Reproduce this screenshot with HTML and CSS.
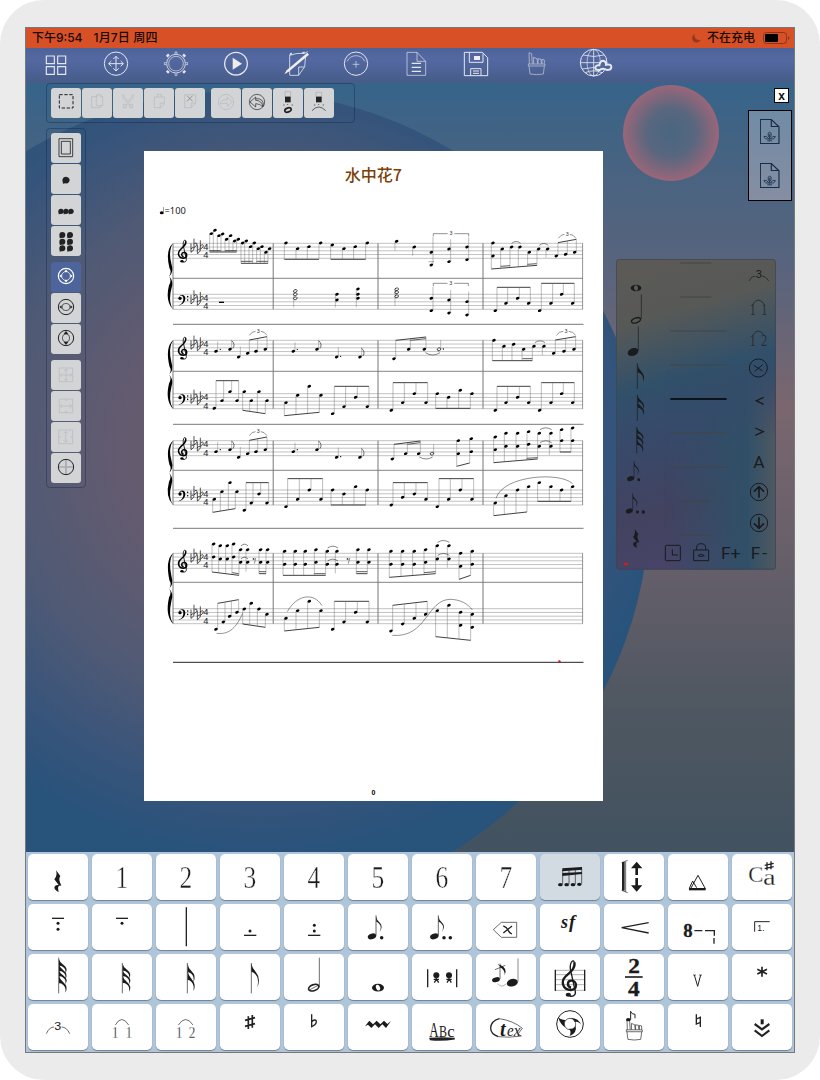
FILE: index.html
```html
<!DOCTYPE html>
<html lang="zh-CN">
<head>
<meta charset="utf-8">
<title>水中花7</title>
<link rel="stylesheet" href="styles.css">
</head>
<body>
<svg class="defs" width="0" height="0">
  <defs>
    <symbol id="treble" viewBox="0 0 54 112" overflow="visible">
      <path d="M30 84C17 81 18 62 32 63C49 64 50 90 30 91C6 91-3 66 15 49C32 34 44 24 40 8" fill="none" stroke="currentColor" stroke-width="7"/>
      <path d="M40 9C38-3 26 6 28 28L43 96C45 108 34 111 26 109" fill="none" stroke="currentColor" stroke-width="4"/>
      <ellipse cx="22" cy="105" rx="8" ry="6" fill="currentColor"/>
    </symbol>
    <symbol id="bass" viewBox="0 0 32 34" overflow="visible">
      <path d="M3 10C3-2 22-3 22 11C22 24 12 30 1 33C14 27 16 20 16 11C16 2 8 1 4 7Z" fill="currentColor"/>
      <circle cx="6" cy="11" r="5" fill="currentColor"/><circle cx="29" cy="6" r="2.3" fill="currentColor"/><circle cx="29" cy="16" r="2.3" fill="currentColor"/>
    </symbol>
    <symbol id="flat" viewBox="0 0 10 28" overflow="visible"><path d="M1 0V27C11 21 12 13 7 13Q4 13 1 17" fill="none" stroke="currentColor" stroke-width="2"/></symbol>
    <symbol id="rest" viewBox="0 0 24 68" overflow="visible"><path d="M7 1L20 18Q13 27 22 44L23 47Q9 42 15 67Q-3 56 4 48Q8 44 15 45L2 28Q12 18 7 1Z" fill="currentColor"/></symbol>
    <symbol id="dotted8" viewBox="0 0 50 74" overflow="visible"><ellipse cx="13" cy="63" rx="13" ry="8.5" transform="rotate(-18 13 63)" fill="currentColor"/><path d="M25 0V60" stroke="currentColor" stroke-width="2"/><path d="M25 3Q27 15 37 23Q47 33 36 50Q43 33 35 26Q31 20 26 19Z" fill="currentColor"/><circle cx="42" cy="67" r="5.3" fill="currentColor"/></symbol>
    <symbol id="flag" viewBox="0 0 26 50" preserveAspectRatio="none" overflow="visible"><path d="M1 0Q3 12 14 20Q30 33 20 50Q23 34 13 27Q7 22 1 23Z" fill="currentColor"/></symbol>
    <symbol id="cup" viewBox="0 0 52 70" overflow="visible"><path d="M3 43L6 66Q26 70 46 66L49 43M1 36H51V42H1ZM4 36L3 2L11 5L13 35M17 35V16L27 20L29 35M30 35V20L39 22L40 35M42 35V22L49 24V35" fill="none" stroke="currentColor" stroke-width="2"/></symbol>
    <symbol id="newpage" viewBox="0 0 58 74" overflow="visible"><path d="M1 1H34L57 23V73H1ZM34 1V22H57" fill="none" stroke="#152d48" stroke-width="3.5"/><path d="M29 64V44M22 65H36M25 51Q22 39 29 39Q36 39 33 51L29 55ZM27 59Q18 48 12 52Q14 62 27 59ZM31 59Q40 48 46 52Q44 62 31 59Z" fill="none" stroke="#152d48" stroke-width="2.5"/></symbol>
  </defs>
</svg>
<main class="device">
<div class="screen">
  <header class="status">
    <span class="clock">下午9:54</span><span class="date">1月7日 周四</span>
    <svg class="moon" viewBox="0 0 10 10"><path d="M3 .5A5 5 0 1 0 9.700 7A5.200 5.200 0 0 1 3 .5Z"/></svg>
    <span class="power">不在充电</span>
    <svg class="battery" viewBox="0 0 27 12"><rect x=".5" y=".5" width="23" height="11" rx="3" fill="none" stroke="#83371f"/><path d="M25 4Q28 6 25 8Z" fill="#83371f"/><rect x="2" y="2" width="13" height="8" rx="1"/></svg>
  </header>
  <nav class="menu">
    <svg viewBox="78 144 180 105"><path d="M139 168H163V191H139ZM173 168H197V191H173ZM139 200H163V223H139ZM173 200H197V223H173Z" stroke-width="3.500"/></svg>
    <svg viewBox="258 144 180 105"><circle cx="348" cy="191" r="35" stroke-width="3"/><path d="M348 169V213M326 191H370M340 177L348 169L356 177M340 205L348 213L356 205M334 183L326 191L334 199M362 183L370 191L362 199" stroke-width="3"/></svg>
    <svg viewBox="438 144 180 105"><circle cx="528" cy="191" r="28" stroke-width="2.500"/><circle cx="528" cy="191" r="22"/><path d="M525 162V156H531V162M525 220V226H531V220M499 188H493V194H499M557 188H563V194H557"/><path d="M506 169l-5-5M550 169l5-5M506 213l-5 5M550 213l5 5" stroke-width="9"/></svg>
    <svg viewBox="618 144 180 105"><circle cx="708" cy="191" r="34" stroke-width="4"/><path d="M698 173V209L726 191Z" class="solid"/></svg>
    <svg viewBox="798 144 180 105"><path d="M869 225V166Q890 158 914 160L923 155M917 167L914 200L896 226H869M896 226V201H914M869 166L874 158" stroke-width="2.500"/><path d="M853 223L860 211L922 158L927 164L866 215Z" class="solid"/><path d="M870 163l6-2M907 160l7-3" stroke-width="5"/></svg>
    <svg viewBox="978 144 180 105"><circle cx="1068" cy="191" r="35" stroke-width="3"/><path d="M1068 183V203M1058 193H1078"/><path d="M1042 184Q1048 168 1068 167Q1088 168 1094 184"/></svg>
    <svg viewBox="-72 144 180 105"><path d="M-9 157H21L47 184V226H-9ZM21 157V184H47"/><path d="M5 190H33M5 202H33M5 214H33" stroke-width="4"/></svg>
    <svg viewBox="108 144 180 105"><path d="M163 157H217L233 173V227H163ZM178 157V187H219V160M182 227V206H213V227" stroke-width="3"/><path d="M189 213H207M189 220H207" stroke-width="3"/><path class="solid" d="M192 168H210V180H192Z"/></svg>
    <svg viewBox="288 144 180 105"><g opacity=".8"><use href="#cup" x="354" y="156" width="52" height="70"/></g></svg>
    <svg viewBox="468 144 180 105"><circle cx="551" cy="188" r="40" stroke-width="3"/><ellipse cx="551" cy="188" rx="20" ry="40"/><path d="M551 148V228M511 188H591M520 165Q551 174 582 165M516 207Q551 198 586 207M526 218Q551 207 576 218" stroke-width="2.500"/><path fill="#52669d" stroke-width="6" d="M564 210Q553 209 557 200Q560 194 568 196Q570 182 580 182Q589 184 588 194Q605 191 604 202Q603 210 591 210Q580 203 572 208Q568 211 564 210Z"/></svg>
  </nav>
  <section class="workspace">
    <svg class="wallpaper" viewBox="26 83 768 769">
      <defs>
        <linearGradient id="sky" x1="0" y1="0" x2="0" y2="1"><stop offset="0" stop-color="#36648a"/><stop offset=".09" stop-color="#456382"/><stop offset=".25" stop-color="#5a647c"/><stop offset=".42" stop-color="#7a666e"/><stop offset=".62" stop-color="#665f6a"/><stop offset=".82" stop-color="#4e5761"/><stop offset="1" stop-color="#425260"/></linearGradient>
        <radialGradient id="orb" gradientUnits="userSpaceOnUse" cx="260" cy="450" r="410"><stop offset="0" stop-color="#6e5b69"/><stop offset=".35" stop-color="#635b70"/><stop offset=".62" stop-color="#505a75"/><stop offset=".85" stop-color="#36547b"/><stop offset="1" stop-color="#28537b"/></radialGradient>
        <radialGradient id="bubble"><stop offset="0" stop-color="#496680"/><stop offset=".5" stop-color="#58677f"/><stop offset="1" stop-color="#9a6679"/></radialGradient>
      </defs>
      <rect x="26" y="83" width="768" height="769" fill="url(#sky)"/>
      <circle cx="240" cy="501" r="410" fill="url(#orb)"/>
      <circle cx="671" cy="133" r="48" fill="url(#bubble)"/>
    </svg>
    <div class="left">
      <div class="strip edit">
        <button><svg viewBox="153 264 90 90"><path d="M178 284H219V324H178Z" stroke-width="3" stroke-dasharray="10 5"/></svg></button>
        <button class="off"><svg viewBox="246 264 90 90"><path d="M275 290H291V284H301L308 291V317H301V323H275ZM289 284V317H307M301 284V291H308"/></svg></button>
        <button class="off"><svg viewBox="339 264 90 90"><path d="M369 284L384 305L399 284V294L373 323M369 284V294L395 323M370 313h9v10h-9zM389 313h9v10h-9z"/></svg></button>
        <button class="off"><svg viewBox="432 264 90 90"><path d="M463 291H493V312L483 323H463ZM472 291V283H484V291M493 309H481V323"/></svg></button>
        <button class="off"><svg viewBox="525 264 90 90"><path d="M554 284H587V309L574 323H554ZM587 309H574V323"/><path d="M561 287L578 304M578 287L561 304" stroke="#777"/></svg></button>
        <button class="off gap"><svg viewBox="633 264 90 90"><circle cx="678" cy="306" r="23"/><path d="M660 312Q662 298 682 299V291L697 306L682 319V310Q669 309 660 312Z"/></svg></button>
        <button><svg viewBox="726 264 90 90"><circle cx="771" cy="306" r="23"/><path d="M750 306L767 291V301Q786 301 789 321Q780 311 767 311V321ZM767 296Q792 294 790 318"/></svg></button>
        <button><svg viewBox="819 264 90 90"><path d="M855 275H872V290H855Z" stroke="#aaa"/><path d="M855 290H872V307H855Z" class="fill"/><path d="M850 315h4M875 315h4M863 312v3"/><ellipse cx="864" cy="330" rx="10" ry="6" transform="rotate(-20 864 330)" stroke-width="5"/></svg></button>
        <button><svg viewBox="912 264 90 90"><path d="M948 277H965V290H948Z" stroke="#aaa"/><path d="M948 290H965V307H948Z" class="fill"/><path d="M942 315h4M968 315h4M956 312v3M936 332Q956 310 977 332"/></svg></button>
      </div>
      <div class="stage">
        <div class="strip side">
          <button><svg viewBox="93 39 90 90"><path d="M117 56H158V110H117ZM124 64H151V102H124Z" stroke-width="2.500"/></svg></button>
          <button><svg viewBox="93 132 90 90"><path class="fill" d="M129 191L127 180Q129 170 138 170Q149 172 149 181Q147 192 136 190Z"/></svg></button>
          <button><svg viewBox="93 225 90 90"><g class="fill"><circle cx="123" cy="274" r="8"/><circle cx="138" cy="274" r="8"/><circle cx="153" cy="274" r="8"/><path d="M116 276v7l6-1zM131 276v7l6-1zM146 276v7l6-1z"/></g></svg></button>
          <button><svg viewBox="93 318 90 90"><g class="fill"><circle cx="127" cy="345" r="9"/><circle cx="150" cy="345" r="9"/><circle cx="127" cy="365" r="9"/><circle cx="150" cy="365" r="9"/><circle cx="127" cy="385" r="9"/><circle cx="150" cy="385" r="9"/><path d="M119 347v8l6-1zM142 347v8l6-1zM119 367v8l6-1zM142 367v8l6-1zM119 387v8l6-1zM142 387v8l6-1z"/></g></svg></button>
          <button class="gap on"><svg viewBox="93 426 90 90"><circle cx="138" cy="468" r="23" stroke-width="3.500"/><circle cx="138" cy="468" r="13"/><path class="fill" d="M138 448l5 8h-10zM138 488l5-8h-10zM118 468l7-5v10zM158 468l-7-5v10z"/></svg></button>
          <button><svg viewBox="93 519 90 90"><circle cx="138" cy="561" r="23" stroke-width="3"/><ellipse cx="138" cy="561" rx="12" ry="11"/><path class="fill" d="M118 561l7-5v10zM158 561l-7-5v10z"/></svg></button>
          <button><svg viewBox="93 612 90 90"><circle cx="138" cy="654" r="23" stroke-width="3"/><ellipse cx="138" cy="654" rx="11" ry="12"/><path class="fill" d="M138 633l7 9h-14zM138 675l7-9h-14z"/></svg></button>
          <button class="gap off"><svg viewBox="93 720 90 90"><path d="M118 744H158V785H118ZM138 747V782M121 765H155M132 753L138 747L144 753M132 776L138 782L144 776M127 759L121 765L127 771M149 759L155 765L149 771"/></svg></button>
          <button class="off"><svg viewBox="93 813 90 90"><path d="M118 837H158V878H118ZM121 858H155M127 852L121 858L127 864M149 852L155 858L149 864M134 839l4 3l4-3M134 876l4-3l4 3"/></svg></button>
          <button class="off"><svg viewBox="93 906 90 90"><path d="M116 930H158V971H116ZM137 934V967M130 941L137 934L144 941M130 960L137 967L144 960M119 948l3 3l-3 3M155 948l-3 3l3 3"/></svg></button>
          <button><svg viewBox="93 999 90 90"><path d="M138 1019V1063M116 1041H160" stroke="#aaa" stroke-width="5"/><circle cx="138" cy="1041" r="23" stroke-width="3"/></svg></button>
        </div>
        <article class="paper"><svg id="score" viewBox="144 151 459 650"></svg></article>
      </div>
    </div>
    <aside class="right">
      <button class="close">x</button>
      <div class="pages">
        <svg viewBox="0 0 58 74"><use href="#newpage"/></svg>
        <svg viewBox="0 0 58 74"><use href="#newpage"/></svg>
      </div>
      <svg class="wheel" viewBox="48 28 480 932">
        <defs>
          <linearGradient id="pane" x1="0" y1="0" x2=".15" y2="1"><stop offset="0" stop-color="#5c5a57"/><stop offset=".22" stop-color="#575957"/><stop offset=".43" stop-color="#31506a"/><stop offset=".6" stop-color="#38496a"/><stop offset=".85" stop-color="#43425f"/><stop offset="1" stop-color="#474467"/></linearGradient>
          <linearGradient id="paneRight"><stop offset=".3" stop-color="#305068" stop-opacity="0"/><stop offset=".82" stop-color="#305068"/><stop offset="1" stop-color="#505861"/></linearGradient>
          <linearGradient id="fadeDown" x1="0" y1="0" x2="0" y2="1"><stop offset=".35" stop-color="#000"/><stop offset=".58" stop-color="#fff"/></linearGradient>
          <mask id="lower"><rect x="48" y="28" width="480" height="932" fill="url(#fadeDown)"/></mask>
        </defs>
        <rect x="48" y="28" width="480" height="932" rx="9" fill="url(#pane)"/>
        <rect x="48" y="28" width="480" height="932" rx="9" fill="url(#paneRight)" mask="url(#lower)"/>
        <rect x="49.500" y="29.500" width="477" height="929" rx="9" fill="none" stroke="#3d4650" stroke-width="2"/>
        <path d="M241 40H334M241 142H334M211 244H380M211 346H380M211 550H380M211 652H380M241 754H334M241 856H334" stroke="#434546" stroke-width="3"/>
        <path d="M211 448H380" stroke="#000" stroke-width="4"/>
        <g color="#191b1e" fill="none" stroke="#191b1e" stroke-width="3">
          <path d="M92 115a16 10 0 1 0 32 0a16 10 0 1 0-32 0ZM102 112a6 8 -15 1 1 12 6a6 8 -15 1 1-12-6Z" fill="currentColor" fill-rule="evenodd" stroke="none"/>
          <ellipse cx="108" cy="212" rx="14" ry="7" transform="rotate(-20 108 212)" stroke-width="4"/><path d="M124 134V208M115 230V303" stroke-width="2"/>
          <ellipse cx="99" cy="307" rx="15" ry="10" transform="rotate(-20 99 307)" fill="currentColor"/>
          <path d="M112 340V418M112 435V514M110 532V611" stroke-width="2"/>
          <g stroke="none"><use href="#flag" x="112" y="344" width="22" height="54"/><use href="#flag" x="112" y="437" width="22" height="42"/><use href="#flag" x="112" y="454" width="22" height="44"/><use href="#flag" x="110" y="534" width="22" height="38"/><use href="#flag" x="110" y="550" width="22" height="40"/><use href="#flag" x="110" y="567" width="22" height="42"/></g>
          <g stroke="none"><use href="#dotted8" x="81" y="633" width="42" height="64"/><use href="#dotted8" x="77" y="730" width="42" height="64"/><circle cx="130" cy="787" r="5" fill="currentColor"/><use href="#rest" x="96" y="837" width="24" height="60"/></g>
          <path d="M447 94Q454 78 466 79M486 79Q498 79 506 94M457 166Q475 136 494 166M457 259Q475 229 494 259" stroke-width="2"/>
          <circle cx="475" cy="355" r="27"/><path d="M461 347L488 364M488 345L464 365"/>
          <path d="M491 443L469 453L491 464M466 535L490 546L466 557" stroke-width="4"/>
          <circle cx="477" cy="727" r="26"/><path d="M477 744V712M462 726L477 711L492 726" stroke-width="5"/>
          <circle cx="477" cy="820" r="26"/><path d="M477 803V835M462 821L477 836L492 821" stroke-width="5"/>
          <rect x="196" y="887" width="45" height="46" rx="3"/><path d="M217 899V916H234"/>
          <path d="M281 901H326V933H281ZM290 901V894Q290 882 303 882Q317 882 317 894V901M294 918Q303 909 313 918Q303 923 294 918"/>
        </g>
        <g fill="#191b1e" font-family="Roboto, sans-serif"><text x="467" y="85" font-size="30" textLength="19" lengthAdjust="spacingAndGlyphs">3</text><text x="477" y="655" font-size="52" text-anchor="middle">A</text><text x="363" y="928" font-size="52">F+</text><text x="452" y="928" font-size="52" textLength="49">F-</text></g>
        <g fill="#2c2e31" font-family="Liberation Serif, serif" font-size="48"><text x="449" y="197" textLength="18" lengthAdjust="spacingAndGlyphs">1</text><text x="484" y="197" textLength="18" lengthAdjust="spacingAndGlyphs">1</text><text x="449" y="290" textLength="18" lengthAdjust="spacingAndGlyphs">1</text><text x="483" y="290" textLength="19" lengthAdjust="spacingAndGlyphs">2</text></g>
        <path d="M72 943H84M77 939V947" stroke="#f01414" stroke-width="4"/>
      </svg>
    </aside>
  </section>
  <section class="keys">
    <div class="key"><svg viewBox="24 27 180 138"><use href="#rest" x="101" y="75" width="24" height="68"/></svg></div>
    <div class="key num"><span>1</span></div><div class="key num"><span>2</span></div><div class="key num"><span>3</span></div><div class="key num"><span>4</span></div><div class="key num"><span>5</span></div><div class="key num"><span>6</span></div><div class="key num"><span>7</span></div>
    <div class="key active"><svg viewBox="15 27 180 138"><path d="M82 70L141 66V74L82 79ZM82 84L141 81V87L82 93Z"/><path d="M83 74V118M102 72V118M121 70V118M140 68V116" class="line w2"/><g><ellipse cx="76" cy="119" rx="7" ry="5"/><ellipse cx="95" cy="119" rx="7" ry="5"/><ellipse cx="114" cy="119" rx="7" ry="5"/><ellipse cx="133" cy="118" rx="7" ry="5"/></g></svg></div>
    <div class="key"><svg viewBox="207 27 180 138"><path d="M265 51V137" class="line w8"/><path d="M260 53L278 46M260 136L278 143M272 50V140" class="line w2"/><path d="M305 50L322 70H309V90H301V70H288ZM301 99H309V121H322L305 140L288 121H301Z"/></svg></div>
    <div class="key"><svg viewBox="399 27 180 138"><path d="M462 129H512V136H462Z"/><path d="M468 129L489 91L511 131M463 130L473 108L485 128" class="line w3"/></svg></div>
    <div class="key"><svg viewBox="591 27 180 138"><g class="serif thin"><text x="640" y="111" font-size="68">C</text><text x="684" y="121" font-size="68" textLength="38" lengthAdjust="spacingAndGlyphs">a</text></g><path class="line w4" d="M696 52V76M708 49V73M689 61L716 55M689 71L716 65"/></svg></div>

    <div class="key"><svg viewBox="24 177 180 138"><path d="M96 220H132" class="line w4"/><circle cx="114" cy="235" r="4.500"/><circle cx="114" cy="253" r="4.500"/></svg></div>
    <div class="key"><svg viewBox="216 177 180 138"><path d="M288 220H324" class="line w4"/><circle cx="306" cy="235" r="4.500"/></svg></div>
    <div class="key"><svg viewBox="408 177 180 138"><path d="M499 187V304" class="line w4"/></svg></div>
    <div class="key"><svg viewBox="600 177 180 138"><path d="M672 271H709" class="line w4"/><circle cx="690" cy="258" r="4.500"/></svg></div>
    <div class="key"><svg viewBox="12 177 180 138"><path d="M84 271H121" class="line w4"/><circle cx="103" cy="241" r="4.500"/><circle cx="103" cy="258" r="4.500"/></svg></div>
    <div class="key"><svg viewBox="204 177 180 138"><use href="#dotted8" x="263" y="211" width="50" height="74"/></svg></div>
    <div class="key"><svg viewBox="396 177 180 138"><use href="#dotted8" x="450" y="211" width="50" height="74"/><circle cx="511" cy="278" r="5.300"/></svg></div>
    <div class="key"><svg viewBox="588 177 180 138"><path class="line w2" d="M640 254L664 232H710V277H664Z"/><path class="line w4" d="M670 243Q680 246 684 255Q688 264 696 267M696 243Q685 252 670 264"/></svg></div>
    <div class="key"><svg viewBox="15 177 180 138"><text class="serif bold" x="78" y="248" font-size="54" font-style="italic" textLength="22">s</text><text class="serif bold" x="102" y="250" font-size="56" font-style="italic">f</text></svg></div>
    <div class="key"><svg viewBox="207 177 180 138"><path d="M341 233L260 248L341 264" class="line w4"/></svg></div>
    <div class="key"><svg viewBox="399 177 180 138"><text class="serif bold heavy" x="445" y="276" font-size="56">8</text><path class="line w4" d="M478 257H502M510 257H538V272M537 279V296"/></svg></div>
    <div class="key"><svg viewBox="591 177 180 138"><path d="M659 260V230H704" class="line w3"/><text x="667" y="258" font-size="26" class="sans">1.</text></svg></div>

    <div class="key"><svg viewBox="24 327 180 138"><path class="line w2" d="M116 338V445"/><use href="#flag" x="116" y="342" width="26" height="44"/><use href="#flag" x="116" y="358" width="26" height="44"/><use href="#flag" x="116" y="374" width="26" height="44"/><use href="#flag" x="116" y="391" width="26" height="52"/></svg></div>
    <div class="key"><svg viewBox="216 327 180 138"><path class="line w2" d="M307 354V445"/><use href="#flag" x="307" y="357" width="26" height="44"/><use href="#flag" x="307" y="374" width="26" height="44"/><use href="#flag" x="307" y="391" width="26" height="50"/></svg></div>
    <div class="key"><svg viewBox="408 327 180 138"><path class="line w2" d="M502 354V445"/><use href="#flag" x="502" y="357" width="24" height="54"/><use href="#flag" x="502" y="377" width="24" height="62"/></svg></div>
    <div class="key"><svg viewBox="600 327 180 138"><path class="line w2" d="M694 354V445"/><path d="M694 356Q697 370 708 382Q723 400 712 427Q718 399 706 388Q700 380 694 380Z"/></svg></div>
    <div class="key"><svg viewBox="12 327 180 138"><path class="line w2" d="M118 338V426"/><ellipse cx="101" cy="428" rx="16" ry="9" transform="rotate(-20 101 428)" class="line w5"/><path d="M88 435L114 421" class="line w2"/></svg></div>
    <div class="key"><svg viewBox="204 327 180 138"><ellipse cx="294" cy="428" rx="18" ry="11.500"/><ellipse cx="294" cy="428" rx="6" ry="9" transform="rotate(-20 294 428)" fill="#fff"/></svg></div>
    <div class="key"><svg viewBox="396 327 180 138"><path class="line w4" d="M443 373V427M530 373V427"/><circle cx="469" cy="391" r="9"/><circle cx="507" cy="391" r="9"/><path class="line w4" d="M469 396V403L463 413M470 403L476 413M507 396V403L501 413M508 403L514 413M461 403H477M499 403H515"/></svg></div>
    <div class="key"><svg viewBox="588 327 180 138"><ellipse cx="648" cy="404" rx="12" ry="7" transform="rotate(-15 648 404)"/><path class="line w2" d="M660 356V402M645 374L676 361M654 358L670 370"/><path d="M660 359Q684 369 674 391Q676 376 660 366Z"/><path class="line w2 soft" d="M653 416Q665 430 678 417"/><ellipse cx="697" cy="413" rx="17" ry="11" transform="rotate(-15 697 413)"/><path class="line w3 soft" d="M714 340V410"/></svg></div>
    <div class="key"><svg viewBox="15 327 180 138"><path d="M61 376H149M61 389H149M61 404H149M61 419H149M61 436H149" class="line w2 soft"/><path d="M61 374V438M149 374V438" class="line w4"/><use href="#treble" x="78" y="344" width="54" height="112"/></svg></div>
    <div class="key"><svg viewBox="207 327 180 138"><path d="M270 396H323" class="line w5"/><g class="serif bold heavy" font-size="64"><text x="280" y="383" textLength="35" lengthAdjust="spacingAndGlyphs">2</text><text x="279" y="453" textLength="35" lengthAdjust="spacingAndGlyphs">4</text></g></svg></div>
    <div class="key"><svg viewBox="399 327 180 138"><path d="M474 390H483M492 390H501" class="line w2"/><path d="M478 390L488 424L497 390" class="line w3"/></svg></div>
    <div class="key"><svg viewBox="591 327 180 138"><path d="M681 365V395M667 373L696 387M696 373L667 387" class="line w5"/></svg></div>

    <div class="key"><svg viewBox="24 477 180 138"><text x="103" y="556" font-size="31" class="sans" textLength="21" lengthAdjust="spacingAndGlyphs">3</text><path class="line w2" d="M79 566Q88 546 102 546M125 546Q140 546 149 566"/></svg></div>
    <div class="key"><svg viewBox="216 477 180 138"><g class="serif thin" font-size="52"><text x="276" y="578" textLength="19" lengthAdjust="spacingAndGlyphs">1</text><text x="317" y="578" textLength="19" lengthAdjust="spacingAndGlyphs">1</text></g><path class="line w2" d="M286 540Q305 507 326 540"/></svg></div>
    <div class="key"><svg viewBox="408 477 180 138"><g class="serif thin" font-size="52"><text x="468" y="578" textLength="19" lengthAdjust="spacingAndGlyphs">1</text><text x="506" y="578" textLength="20" lengthAdjust="spacingAndGlyphs">2</text></g><path class="line w2" d="M475 540Q497 507 519 540"/></svg></div>
    <div class="key"><svg viewBox="600 477 180 138"><path class="line w5" d="M685 514V552M697 510V548M675 526L705 518M675 544L705 536"/></svg></div>
    <div class="key"><svg viewBox="12 477 180 138"><path class="line w4" d="M95 508V545Q110 538 109 528Q105 521 95 530"/></svg></div>
    <div class="key"><svg viewBox="204 477 180 138"><path d="M255 544L268 527L279 538L290 527L301 538L312 527L322 537L333 528L318 549L307 538L296 549L285 538L274 549L264 539Z"/></svg></div>
    <div class="key"><svg viewBox="396 477 180 138"><g class="serif"><text x="448" y="575" font-size="60" textLength="28" lengthAdjust="spacingAndGlyphs">A</text><text x="477" y="575" font-size="50" textLength="24" lengthAdjust="spacingAndGlyphs">B</text><text x="502" y="575" font-size="50">c</text></g><path class="line w5" d="M448 581Q485 578 524 581Q485 587 450 583"/></svg></div>
    <div class="key"><svg viewBox="588 477 180 138"><path class="line w4" d="M655 575Q632 567 632 549Q633 528 658 521"/><path class="line w2" d="M658 521Q700 527 727 550L714 567L724 573Q686 579 655 575"/><text class="serif bold" x="660" y="572" font-size="60" font-style="italic">t</text><text class="serif" x="681" y="572" font-size="52" font-style="italic" textLength="40" lengthAdjust="spacingAndGlyphs">ex</text></svg></div>
    <div class="key"><svg viewBox="15 477 180 138"><circle cx="105" cy="537" r="40" class="line w3"/><path d="M69 517Q77 540 91 547Q84 533 92 525Q80 527 69 517ZM103 519Q129 516 140 541Q131 528 119 531Q116 521 103 519ZM104 573Q127 564 122 542Q115 554 102 551Q110 560 104 573Z"/><circle cx="105" cy="537" r="17" class="line w2"/></svg></div>
    <div class="key"><svg viewBox="207 477 180 138"><use href="#cup" x="273" y="520" width="50" height="67"/><ellipse cx="280" cy="524" rx="7" ry="5"/><path d="M287 498V524M287 500Q290 508 300 508V520" class="line w3"/></svg></div>
    <div class="key"><svg viewBox="399 477 180 138"><path class="line w4" d="M484 508V537L496 532M496 546V517L484 522"/></svg></div>
    <div class="key"><svg viewBox="591 477 180 138"><path d="M677 523H686V538H677Z"/><path class="line w6" d="M659 537L681 553L703 537M659 556L681 573L703 556"/></svg></div>
  </section>
</div>
</main>
<script src="score.js"></script>
</body>
</html>
```
FILE: styles.css
```css
* { box-sizing: border-box; }
body { margin: 0; background: #fff; }
button { font: inherit; border: 0; padding: 0; margin: 0; }
svg { display: block; }
.defs { position: absolute; }
.device { width: 820px; height: 1080px; padding: 27px 25px; background: #ebebeb; border-radius: 44px; }
.screen { width: 770px; height: 1026px; border: 1px solid #74797c; }
.status { height: 20px; background: #d85026; display: flex; align-items: center; padding: 0 4px 0 6px; font: 500 12px/20px Inter, "Noto Sans CJK SC", sans-serif; color: #160a06; }
.date { margin-left: 11px; letter-spacing: .15px; }
.moon { width: 9px; height: 10px; margin-left: auto; margin-right: 6px; fill: #96391f; }
.battery { width: 27px; height: 12px; margin-left: 8px; }
.menu { height: 35px; display: flex; background: linear-gradient(#4d6297, #5469a2 30%, #4b6092 75%, #465c86); color: #ebebeb; }
.menu svg { width: 60px; height: 35px; fill: none; stroke: #e5e7ee; stroke-width: 2; }
.menu .solid { fill: #eee; stroke: none; }
.workspace { position: relative; height: 769px; display: flex; justify-content: space-between; padding-left: 20px; }
.wallpaper { position: absolute; inset: 0; width: 768px; height: 769px; }
.left, .right { position: relative; }
.strip { display: flex; gap: 1px; padding: 4px; border: 1px solid rgba(10, 30, 60, .35); border-radius: 4px; }
.strip button { width: 30px; height: 30px; flex: none; border-radius: 3px; background: #d2d4d5; color: #222; }
.strip button svg { width: 30px; height: 30px; fill: none; stroke: currentColor; stroke-width: 2; }
.strip .fill { fill: currentColor; stroke: none; }
.strip .off { color: #b7b9ba; }
.strip .on { background: #4e659c; color: #fff; }
.edit { width: 309px; height: 40px; }
.edit .gap { margin-left: 5px; }
.stage { display: flex; align-items: flex-start; gap: 58px; padding-top: 5px; }
.side { width: 40px; height: 360px; flex-direction: column; }
.side .gap { margin-top: 5px; }
.paper { width: 459px; height: 649.5px; margin-top: 23px; background: #fff; overflow: hidden; }
.paper svg { width: 459px; height: 650px; }
.right { width: 178px; display: flex; flex-direction: column; align-items: flex-end; padding: 5px 2px 0 0; }
.close { width: 15px; height: 15px; margin-right: 3px; background: #fff; border: 1px solid #000; font: bold 12px/12px "Liberation Sans", sans-serif; color: #111; }
.pages { width: 44px; height: 91px; margin-top: 7px; border: 1px solid #000; background: linear-gradient(#718ba5, #858ea2); display: flex; flex-direction: column; align-items: center; gap: 19px; padding-top: 8px; }
.pages svg { width: 19.3px; height: 25px; }
.wheel { width: 160px; height: 310.67px; margin: 58px 16px 0 0; }
.keys { height: 200px; padding: 2px; background: #b0c5db; display: grid; grid-template-columns: repeat(12, 60px); grid-auto-rows: 46px; gap: 4px; }
.key { background: #fff; border-radius: 5px; box-shadow: 0 1px 1px #70808f; color: #1b1b1b; }
.key svg { width: 60px; height: 46px; fill: currentColor; }
.num { font: 31px/48px "Liberation Serif", serif; text-align: center; }
.num span { display: inline-block; transform: scaleX(.82); -webkit-text-stroke: .4px #fff; }
.active { background: #d2dbe1; }
.line { fill: none; stroke: #222; }
.w2 { stroke-width: 2; }
.w3 { stroke-width: 3; }
.w4 { stroke-width: 4; }
.w5 { stroke-width: 5; }
.w6 { stroke-width: 6.5; }
.w8 { stroke-width: 8; }
.soft { stroke: #8c8c8c; }
.serif { font-family: "Liberation Serif", serif; }
.sans { font-family: "Liberation Sans", sans-serif; }
.bold { font-weight: bold; }
.thin { stroke: #fff; stroke-width: .8; }
.heavy { stroke: #1b1b1b; stroke-width: 1; }
.title { font: 500 16px "Noto Sans CJK SC", sans-serif; fill: #7b3f0a; }
.tempo { font: 9.3px "Noto Sans", sans-serif; fill: #222; }
.meter { font: 28px "Liberation Sans", sans-serif; fill: #222; }
```
FILE: score.js
```js
const score = document.getElementById('score');
const out = [];

const line = (x1, y1, x2, y2, w = 1.2, c = '#333') =>
  `<path d="M${x1} ${y1}L${x2} ${y2}" stroke="${c}" stroke-width="${w}" fill="none"/>`;
const head = (x, y, open) =>
  `<ellipse cx="${x}" cy="${y}" rx="5.500" ry="4" transform="rotate(-20 ${x} ${y})" fill="${open ? '#fff' : '#000'}" ${open ? 'stroke="#111" stroke-width="2.2"' : ''}/>`;
const parse = (s) => s.split(' ').map((p) => p.split(',').map(Number));

// Beamed group: chords are written x,y1,y2; further beams are x1,y1,x2,y2
function beam(dir, b1, b2, notes, extra = []) {
  const ns = parse(notes);
  const sx = (n) => n[0] + 5 * dir;
  const a = sx(ns[0]), z = sx(ns[ns.length - 1]);
  let s = line(a, b1, z, b2, 2.6, '#222');
  for (const n of ns) {
    const by = b1 + (b2 - b1) * (sx(n) - a) / (z - a);
    s += line(sx(n), dir > 0 ? Math.max(...n.slice(1)) : Math.min(...n.slice(1)), sx(n), by, 1.3, '#666');
    n.slice(1).forEach((y) => { s += head(n[0], y); });
  }
  for (const e of extra) s += line(...e, 2.4, '#333');
  return s;
}
// Single note or chord with its own stem
function note(dir, end, str, open) {
  const [x, ...ys] = parse(str)[0];
  return line(x + 5 * dir, dir > 0 ? Math.max(...ys) : Math.min(...ys), x + 5 * dir, end, 1.3, '#666') +
    ys.map((y) => head(x, y, open)).join('');
}
const flag = (x, y) => `<path d="M${x + 5} ${y - 26}Q${x + 17} ${y - 15} ${x + 9} ${y - 3}" fill="none" stroke="#222" stroke-width="2"/>`;
const dot = (x, y) => `<circle cx="${x}" cy="${y}" r="2"/>`;
const arc = (x1, x2, y, h = -11) => `<path d="M${x1} ${y}Q${(x1 + x2) / 2} ${y + h} ${x2} ${y}" fill="none" stroke="#333" stroke-width="1.8"/>`;
const curve = (d) => `<path d="${d}" fill="none" stroke="#333" stroke-width="1.6"/>`;
const three = (x, y) => `<text x="${x}" y="${y + 5}" font-size="16" text-anchor="middle" font-family="Liberation Sans, sans-serif" fill="#333">3</text>`;
const tripArc = (x1, x2, y) => {
  const m = (x1 + x2) / 2;
  return curve(`M${x1} ${y + 12}Q${x1 + 8} ${y} ${m - 8} ${y}M${m + 8} ${y}Q${x2 - 8} ${y} ${x2} ${y + 12}`) + three(m, y);
};
const bracket = (x1, x2, y) => {
  const m = (x1 + x2) / 2;
  return curve(`M${x1} ${y + 8}V${y}H${m - 10}M${m + 10} ${y}H${x2}V${y + 8}`) + three(m, y);
};
const rest8 = (x, y) => curve(`M${x - 4} ${y - 7}Q${x} ${y - 3} ${x + 4} ${y - 8}L${x} ${y + 8}`) + dot(x - 3, y - 6);
const place = (x, y, body) => out.push(`<g transform="translate(${x} ${y}) scale(.3333)">${body}</g>`);

out.push('<text class="title" x="373.200" y="180.500" text-anchor="middle">水中花7</text>');
out.push('<ellipse cx="161.800" cy="212.800" rx="2" ry="1.500"/><path d="M163.500 207V213" stroke="#777" stroke-width=".7"/><text class="tempo" x="164.500" y="214">=100</text>');

// Staves, clefs and key signatures
const systems = [[243.3, 278.3, 294.3, 324.3], [340.3, 371.3, 393.7, 424.3], [440.7, 470.3, 490, 528.3], [553.3, 582.3, 608.7, 662.3]];
for (const [t, m, b, sep] of systems) {
  for (const top of [t, b]) {
    for (let i = 0; i < 5; i++) out.push(line(173, top + i * 3.75, 583, top + i * 3.75, 0.6, '#999'));
    const isBass = top === b;
    let s = isBass
      ? '<use href="#bass" x="15" y="1" width="32" height="34"/>'
      : '<use href="#treble" x="13" y="-12" width="34" height="70"/>';
    [[53, 0], [62, -14], [72, 4], [81, -9]].forEach(([x, y]) => { s += `<use href="#flat" x="${x}" y="${y + (isBass ? 2 : 0)}" width="10" height="28"/>`; });
    s += '<text class="meter" x="91" y="20">4</text><text class="meter" x="91" y="45">4</text>';
    place(173, top, s);
  }
  const end = b + 15, h = (t + end) / 2;
  out.push(line(173, m, 583, m, 0.8, '#666'), line(173, sep, 583.5, sep, 1, sep > 600 ? '#222' : '#777'));
  for (const x of [173, 273.2, 378, 483, 582.6]) out.push(line(x, t, x, end, x > 582 ? 0.8 : 1, '#777'));
  out.push(`<path d="M173 ${t}Q165 ${t + 7} 169.500 ${h - 8}Q172 ${h - 4} 169 ${h}Q172 ${h + 4} 169 ${h + 9}Q165 ${end - 8} 173 ${end}Q168 ${end - 8} 171.500 ${h + 12}Q174 ${h + 5} 169 ${h}Q174 ${h - 4} 171.500 ${h - 12}Q168 ${t + 8} 173 ${t}Z"/>`);
}

place(144, 150,
  beam(-1, 306, 306, '202,251 213,241 225,257 236,252 248,268 260,257 272,273 283,268', [[197, 302, 230, 302], [243, 302, 278, 302]]) +
  beam(-1, 340, 340, '296,279 307,273 320,290 331,279 343,296 354,290 366,307 377,296', [[291, 334, 326, 334], [338, 334, 372, 334]]) +
  beam(-1, 328, 328, '426,279 461,296 495,290 530,279') + beam(-1, 328, 328, '565,285 600,296 634,290 670,279') +
  '<rect x="225" y="455" width="15" height="4"/>' + note(-1, 472, '454,423,433,445', true) +
  note(-1, 472, '579,433,450') + note(-1, 472, '642,417,433,445'));

place(370, 220,
  note(-1, 92, '80,64') + note(-1, 107, '133,81') + note(1, 50, '184,97,135') + note(1, 58, '237,87,125') + note(1, 52, '291,81,119') + line(176, 125, 192, 125) +
  bracket(190, 296, 41) + note(-1, 257, '80,208,217,229', true) + note(1, 200, '184,235,272') + note(1, 210, '237,240,279') + note(1, 215, '291,245,285') + bracket(190, 295, 190) +
  beam(-1, 147, 136, '369,69,108 397,87 425,81 450,81 478,97 506,87', [[392, 139, 420, 137], [472, 133, 500, 131]]) + note(-1, 113, '533,87') +
  arc(425, 452, 70) + arc(508, 535, 76) + beam(1, 68, 58, '559,108 587,103 614,97') + tripArc(565, 618, 43) +
  beam(1, 202, 202, '376,272 408,250 443,235 476,250') + beam(1, 190, 190, '509,272 543,250 575,223 608,250'));

const openingPhrase = (y) => note(1, y + 50, `168,${y + 79}`) + dot(181, y + 73) + note(1, y + 46, `210,${y + 73}`) + flag(210, y + 73) + note(1, y + 65, `236,${y + 96}`) +
  beam(1, y + 45, y + 35, `263,${y + 85} 288,${y + 79} 316,${y + 73}`) + tripArc(268, 321, y + 19) +
  note(1, y + 52, `400,${y + 79}`) + dot(412, y + 73) + note(1, y + 46, `471,${y + 73}`) + flag(471, y + 73) +
  note(1, y + 67, `530,${y + 96}`) + dot(542, y + 94) + note(1, y + 67, `600,${y + 96}`) + flag(600, y + 96);

place(160, 325, openingPhrase(0) + openingPhrase(301) +
  beam(1, 167, 167, '163,250 186,227 210,200 231,227') + beam(-1, 256, 266, '253,200 274,227 297,200 321,227') +
  beam(-1, 272, 262, '378,233 413,211 448,184 483,211') + beam(1, 184, 184, '518,266 552,245 587,217 622,245') +
  beam(-1, 562, 551, '163,523 186,500 210,473 231,500') + beam(1, 473, 473, '253,556 274,534 297,507 321,534') +
  beam(1, 461, 461, '378,545 413,523 448,495 483,523') + beam(-1, 540, 540, '518,495 552,507 587,485 622,495'));

place(370, 325,
  beam(1, 46, 36, '72,101 116,73 163,73', [[121, 46, 168, 41]]) + note(1, 45, '207,73', true) + dot(220, 72) + arc(166, 210, 83, 14) +
  beam(-1, 107, 107, '372,46 402,64 431,58 461,73 492,64', [[457, 101, 487, 101]]) + note(-1, 90, '522,64') + arc(495, 525, 53) +
  beam(1, 45, 35, '551,85 582,79 612,73') + tripArc(559, 617, 19) +
  beam(1, 173, 173, '64,256 98,233 133,206 168,233') + beam(-1, 250, 250, '202,206 236,217 271,196 306,206') +
  beam(1, 184, 184, '376,256 408,233 443,217 476,233') + beam(1, 173, 173, '509,256 543,233 575,206 608,233') +
  beam(1, 358, 348, '67,402 107,386 146,386', [[112, 358, 151, 353]]) + note(1, 358, '186,386', true) + arc(148, 188, 396, 12) +
  beam(-1, 424, 414, '265,347,386 304,341,380') +
  beam(-1, 413, 402, '376,336,374 408,325,364 443,325,364 476,320,358 508,325,364', [[470, 400, 503, 398]]) + note(-1, 390, '543,325,364') +
  beam(-1, 381, 381, '575,314,347 608,309,347') + arc(510, 545, 314) + arc(510, 545, 353) +
  beam(1, 473, 473, '64,540 98,517 133,507 168,523') + beam(1, 461, 461, '202,545 236,523 271,495 306,523') +
  beam(-1, 572, 561, '376,534 408,512 443,495 476,485') + beam(-1, 529, 529, '508,473 543,485 575,495 608,485') +
  curve('M378 520C400 450 570 440 608 476'));

place(160, 530,
  beam(-1, 126, 136, '161,42,81 181,47,87 202,47,87 221,42,81 242,59,97', [[217, 128, 236, 131]]) + note(-1, 125, '263,59,97') + rest8(283, 93) +
  beam(-1, 131, 131, '302,59,97 323,59,97', [[297, 125, 318, 125]]) + arc(243, 264, 48) + arc(243, 264, 87) +
  beam(-1, 136, 136, '374,64,103 406,64,103 436,64,103 468,59,97 502,64,103', [[463, 131, 496, 131]]) + note(-1, 130, '531,64,103') + rest8(565, 93) +
  beam(-1, 131, 131, '594,59,97 627,59,97', [[589, 125, 622, 125]]) + arc(503, 534, 54) + arc(503, 534, 93) +
  beam(-1, 142, 131, '693,64,103 728,64,103 763,64,103 797,59,97 832,47,87', [[792, 128, 827, 125]]) + note(-1, 113, '867,47,87') + arc(833, 868, 37) + arc(833, 868, 76) +
  beam(-1, 148, 136, '902,70,109 937,64,103') +
  beam(1, 220, 209, '168,298 190,276 209,259 231,247') + beam(-1, 282, 292, '253,237 274,220 297,237 321,253') + curve('M170 310C210 315 230 290 248 250') +
  beam(-1, 303, 292, '378,265 413,242 448,214 483,242') + curve('M382 245C410 195 460 185 486 227') + beam(1, 214, 214, '518,298 552,276 587,247 622,276') +
  beam(1, 226, 214, '693,303 728,282 763,265 797,253') + beam(-1, 320, 331, '832,242 867,226 902,247,286 937,253,292') +
  curve('M697 316C800 325 800 210 870 208C900 208 925 222 937 240') +
  '<path d="M1194 394H1203M1198 390V398" stroke="#d22" stroke-width="3"/>');

out.push('<text x="373.500" y="795" text-anchor="middle" font-size="7" font-weight="bold" font-family="Liberation Sans, sans-serif">0</text>');
score.innerHTML = out.join('');
```
